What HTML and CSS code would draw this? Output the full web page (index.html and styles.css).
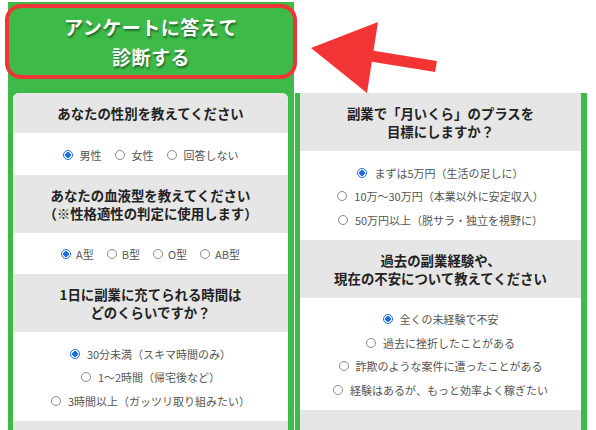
FILE: index.html
```html
<!DOCTYPE html>
<html lang="ja">
<head>
<meta charset="utf-8">
<title>アンケートに答えて診断する</title>
<link rel="stylesheet" href="styles.css">
</head>
<body>
<div class="page">
  <section class="left">
    <div class="hero">
      <span>アンケートに答えて</span>
      <span>診断する</span>
    </div>
    <div class="card">
      <div class="q-head">あなたの性別を教えてください</div>
      <div class="q-opts row">
        <label class="opt"><input type="radio" name="sex" checked><span>男性</span></label>
        <label class="opt"><input type="radio" name="sex"><span>女性</span></label>
        <label class="opt"><input type="radio" name="sex"><span>回答しない</span></label>
      </div>
      <div class="q-head">あなたの血液型を教えてください<br>（※性格適性の判定に使用します）</div>
      <div class="q-opts row tight">
        <label class="opt"><input type="radio" name="blood" checked><span>A型</span></label>
        <label class="opt"><input type="radio" name="blood"><span>B型</span></label>
        <label class="opt"><input type="radio" name="blood"><span>O型</span></label>
        <label class="opt"><input type="radio" name="blood"><span>AB型</span></label>
      </div>
      <div class="q-head">1日に副業に充てられる時間は<br>どのくらいですか？</div>
      <div class="q-opts">
        <label class="opt"><input type="radio" name="time" checked><span>30分未満（スキマ時間のみ）</span></label>
        <label class="opt"><input type="radio" name="time"><span>1～2時間（帰宅後など）</span></label>
        <label class="opt"><input type="radio" name="time"><span>3時間以上（ガッツリ取り組みたい）</span></label>
      </div>
      <div class="q-head">&nbsp;<br>&nbsp;</div>
    </div>
  </section>
  <section class="right">
    <div class="q-head">副業で「月いくら」のプラスを<br>目標にしますか？</div>
    <div class="q-opts">
      <label class="opt"><input type="radio" name="goal" checked><span>まずは5万円（生活の足しに）</span></label>
      <label class="opt"><input type="radio" name="goal"><span>10万～30万円（本業以外に安定収入）</span></label>
      <label class="opt"><input type="radio" name="goal"><span>50万円以上（脱サラ・独立を視野に）</span></label>
    </div>
    <div class="q-head">過去の副業経験や、<br>現在の不安について教えてください</div>
    <div class="q-opts">
      <label class="opt"><input type="radio" name="exp" checked><span>全くの未経験で不安</span></label>
      <label class="opt"><input type="radio" name="exp"><span>過去に挫折したことがある</span></label>
      <label class="opt"><input type="radio" name="exp"><span>詐欺のような案件に遭ったことがある</span></label>
      <label class="opt"><input type="radio" name="exp"><span>経験はあるが、もっと効率よく稼ぎたい</span></label>
    </div>
    <div class="q-head">&nbsp;<br>&nbsp;</div>
  </section>
  <svg class="arrow" width="596" height="430" viewBox="0 0 596 430" aria-hidden="true">
    <line x1="362" y1="54.5" x2="436" y2="66.5" stroke="#f23434" stroke-width="11"/>
    <polygon points="311,48 378,22 367,93" fill="#f23434"/>
  </svg>
</div>
</body>
</html>
```

FILE: styles.css
```css
html, body {
  margin: 0;
  padding: 0;
  background: #ffffff;
}

body {
  font-family: "Noto Sans CJK JP", "Noto Sans", sans-serif;
}

.page {
  position: relative;
  display: flex;
  align-items: flex-start;
  width: 596px;
  height: 430px;
  padding: 2px 0 0 8px;
  box-sizing: border-box;
  overflow: hidden;
}

.left {
  width: 286px;
  flex: none;
  background: #3dba47;
  padding: 0 6px 0 5px;
  box-sizing: border-box;
}

.hero {
  margin: 2px -9px 14px -8px;
  height: 75px;
  box-sizing: border-box;
  border: 4.5px solid #ef3636;
  border-radius: 16px;
  display: flex;
  flex-direction: column;
  align-items: center;
  justify-content: center;
  color: #ffffff;
  font-size: 19px;
  letter-spacing: 0.5px;
  line-height: 30px;
  font-weight: 700;
  text-shadow: 1px 2px 2px rgba(0, 0, 0, 0.45);
}

.card {
  background: #ffffff;
  border-radius: 6px 6px 0 0;
  overflow: hidden;
}

.q-head {
  background: #e6e6e6;
  padding: 11px 6px;
  text-align: center;
  font-weight: 700;
  font-size: 13.4px;
  line-height: 18px;
  color: #222222;
}

.q-opts {
  background: #ffffff;
  padding: 10px 0 8px;
  display: flex;
  flex-direction: column;
  align-items: center;
}

.q-opts.row {
  flex-direction: row;
  justify-content: center;
  gap: 13px;
}

.opt {
  display: flex;
  align-items: center;
  gap: 7px;
  height: 23.5px;
  font-size: 11px;
  color: #555555;
  white-space: nowrap;
}

.q-opts.tight .opt {
  gap: 5px;
}

.opt input {
  appearance: none;
  -webkit-appearance: none;
  margin: 0;
  width: 10px;
  height: 10px;
  border-radius: 50%;
  border: 1px solid #8a8a8a;
  background: #ffffff;
  box-sizing: border-box;
  flex: none;
}

.opt input:checked {
  border-color: #1a6fe0;
  background: radial-gradient(circle, #1a6fe0 0 2.6px, #ffffff 3px 100%);
}

.right {
  flex: none;
  width: 292px;
  margin-left: 1px;
  margin-top: 91px;
  border-left: 5px solid #3dba47;
  border-right: 6px solid #3dba47;
  box-sizing: border-box;
  background: #ffffff;
}

.arrow {
  position: absolute;
  left: 0;
  top: 0;
  pointer-events: none;
}
```
